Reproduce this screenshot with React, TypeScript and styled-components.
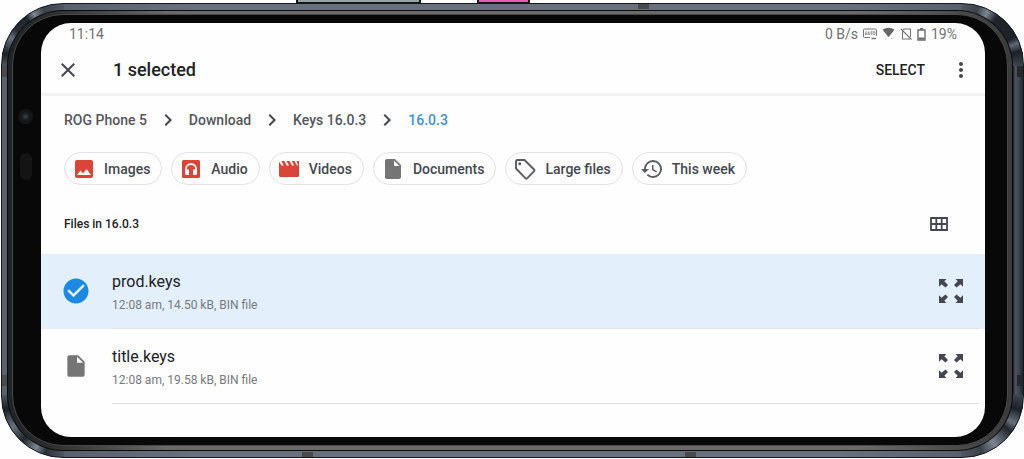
import React from 'react';
import styled, { createGlobalStyle, css } from 'styled-components';
import { MdClose, MdChevronRight, MdImage, MdInsertDriveFile, MdHistory, MdMoreVert, MdCheckCircle } from 'react-icons/md';

const GlobalStyle = createGlobalStyle`
  *, *::before, *::after { box-sizing: border-box; }
  body { margin: 0; background: #fefefe; font-family: Roboto, "Liberation Sans", sans-serif; overflow-x: hidden; }
  h1, h2, p, ul, ol { margin: 0; padding: 0; font-weight: inherit; list-style: none; }
  button { border: 0; padding: 0; background: none; font: inherit; color: inherit; cursor: pointer; }
  svg { display: block; flex: none; }
`;

const ink = '#44474f';

const Page = styled.div`
  display: flex;
  flex-direction: column;
`;

const SideKeys = styled.div`
  display: grid;
  grid-template-columns: 296fr 125fr 56fr 53fr 494fr;
  height: 3px;
`;

const SideKey = styled.span<{ $tone: string; $column: number }>`
  grid-column: ${p => p.$column};
  background: ${p => p.$tone};
  border: solid #151515;
  border-width: 0 2px 1px;
`;

const Rail = styled.div`
  position: relative;
  margin: 0 0 0 1px;
  padding: 6px 10px 6px 5px;
  border-radius: 62px;
  border: 1px solid #14171b;
  background:
    conic-gradient(from 270deg at 100% 100%, #4c555f 0, #1b2026 12deg, #68727e 28deg, #2a3038 36deg, #20252c 52deg, #7c8692 60deg, #3a424b 70deg, #4f5863 90deg) 0 0 / 62px 62px no-repeat,
    conic-gradient(from 0deg at 0 100%, #4f5863 0, #3a424b 16deg, #7c8692 26deg, #20252c 36deg, #1c2128 62deg, #5f6975 68deg, #1b2026 76deg, #3d454f 90deg) 100% 0 / 62px 62px no-repeat,
    conic-gradient(from 90deg at 0 0, #3d454f 0, #1b2026 14deg, #68727e 28deg, #20252c 36deg, #7c8692 56deg, #3a424b 70deg, #4f5863 90deg) 100% 100% / 62px 62px no-repeat,
    conic-gradient(from 180deg at 100% 0, #4f5863 0, #2a3038 18deg, #7c8692 28deg, #20252c 42deg, #68727e 58deg, #1b2026 76deg, #4c555f 90deg) 0 100% / 62px 62px no-repeat,
    linear-gradient(270deg, #20252c 0, #3d454f 4px, #4b5460 8px, #14171b 10px, transparent 10px),
    linear-gradient(90deg, #59626d 0, #59626d 5px, transparent 5px),
    linear-gradient(90deg, #4f5863 0, #68717c 190px, #68717c 82%, #4f5863 100%);
`;

const Trim = styled.div`
  padding: 1px;
  border-radius: 56px;
  background: #0c0c0c;
`;

const Lip = styled.div`
  padding: 3px 4px 4px 4px;
  border-radius: 55px;
  background: linear-gradient(90deg, #202327 0, #2c2c2c 40px, #6b6969 160px, #6b6969 85%, #3a3a3a 100%);
`;

const Bezel = styled.div`
  padding: 8px 22px 8px 28px;
  border-radius: 51px;
  border: 1px solid #4a4a4a;
  background: #080808;
`;

const band = css`
  position: absolute;
  background: #4a4a4b;
`;

const AntennaTop = styled.span`${band} top: 0; left: 62.3%; width: 11px; height: 5px;`;
const AntennaLeft = styled.span<{ $at: string }>`${band} left: 0; top: ${p => p.$at}; width: 5px; height: 11px;`;
const AntennaRight = styled.span<{ $at: string }>`${band} right: 0; top: ${p => p.$at}; width: 6px; height: 11px; background: #26282b;`;
const AntennaBottom = styled.span<{ $at: string }>`${band} bottom: 0; left: ${p => p.$at}; width: 11px; height: 5px;`;

const Camera = styled.span`
  position: absolute;
  left: 16px;
  top: 105px;
  width: 15px;
  height: 15px;
  border-radius: 50%;
  background: radial-gradient(circle, #3b444e 0, #1d2126 3px, #151515 5px);
`;

const Sensor = styled.span`
  position: absolute;
  left: 18px;
  top: 149px;
  width: 12px;
  height: 27px;
  border-radius: 6px;
  background: #141414;
`;

const Screen = styled.main`
  padding-bottom: 33px;
  border-radius: 30px;
  overflow: hidden;
  background: #fefefe;
  color: #202124;
`;

const StatusBar = styled.div`
  display: flex;
  align-items: center;
  justify-content: space-between;
  height: 22px;
  padding: 0 28px;
  font-size: 14px;
  line-height: 20px;
  color: #707070;
`;

const StatusIcons = styled.div`
  display: flex;
  align-items: center;
  gap: 5px;
`;

const Toolbar = styled.header`
  display: flex;
  align-items: center;
  height: 51px;
  padding: 1px 12px 0 15px;
  border-bottom: 3px solid #f2f2f2;
`;

const Title = styled.h1`
  flex: 1;
  margin-left: 33px;
  font-size: 18px;
  line-height: 24px;
  font-weight: 500;
`;

const IconButton = styled.button`
  display: flex;
  color: ${ink};
`;

const SelectButton = styled.button`
  margin-right: 24px;
  font-size: 14px;
  line-height: 20px;
  font-weight: 500;
`;

const Crumbs = styled.ol`
  display: flex;
  align-items: center;
  height: 48px;
  padding: 0 23px;
  font-size: 14px;
  line-height: 20px;
  font-weight: 500;
  color: #54565c;
`;

const Crumb = styled.li`
  display: flex;
  align-items: center;

  svg { margin: 0 9px; color: ${ink}; }
`;

const CrumbLink = styled.a<{ $current?: boolean }>`
  color: ${p => (p.$current ? '#3b93da' : 'inherit')};
  text-decoration: none;
`;

const Chips = styled.div`
  display: flex;
  flex-wrap: wrap;
  gap: 9px;
  padding: 8px 23px 0;
`;

const Chip = styled.button<{ $tone?: string }>`
  display: flex;
  align-items: center;
  gap: 8px;
  height: 33px;
  padding: 0 11px 0 7px;
  border: 1px solid #e2e2e4;
  border-radius: 17px;
  font-size: 14px;
  line-height: 20px;
  font-weight: 500;
  color: ${ink};

  svg { color: ${p => p.$tone ?? '#5a5c62'}; }
`;

const SectionHead = styled.div`
  display: flex;
  align-items: center;
  justify-content: space-between;
  height: 69px;
  padding: 8px 37px 0 23px;
`;

const SectionTitle = styled.h2`
  font-size: 12px;
  line-height: 16px;
  font-weight: 500;
`;

const FileRow = styled.li<{ $selected?: boolean }>`
  display: flex;
  height: 75px;
  padding: 0 6px 0 20px;
  background: ${p => (p.$selected ? '#e3effb' : 'transparent')};
`;

const Pick = styled.label`
  display: flex;
  align-items: center;
  justify-content: center;
  width: 30px;
  padding-bottom: 1px;
  color: #757575;
  cursor: pointer;

  input:checked ~ svg { color: #1e88e5; }
`;

const PickInput = styled.input`
  position: absolute;
  width: 1px;
  height: 1px;
  margin: 0;
  opacity: 0;
`;

const FileBody = styled.div`
  display: flex;
  flex: 1;
  align-items: center;
  justify-content: space-between;
  margin-left: 21px;
  padding-right: 16px;
  border-bottom: 1px solid #dfe1e5;
`;

const FileText = styled.div`
  padding-top: 4px;
`;

const FileName = styled.p`
  font-size: 16px;
  line-height: 24px;
`;

const FileMeta = styled.p`
  font-size: 12px;
  line-height: 22px;
  color: #77797d;
`;

const AutoIcon = () => (
  <svg width="14" height="12" viewBox="0 0 14 12" fill="none" stroke="#777" aria-hidden="true">
    <path d="M7 9.5H1.500Q.5 9.500.5 8.500V2Q.5 1 1.500 1H12.500Q13.500 1 13.500 2V8" />
    <path d="M2.500 7V4.500L3.300 3.500 4 4.500V7M2.500 5.700H4M5.500 3.500V6.500H7V3.500M7.800 3.700H9.600M8.700 3.700V7M10.300 3.700H12V6.500H10.300Z" strokeWidth=".7" />
    <path d="M8.500 10.500H13" strokeWidth="1.600" />
  </svg>
);

const WifiIcon = () => (
  <svg width="13" height="14" viewBox="0 0 13 14" fill="#666" aria-hidden="true">
    <path d="M.5 2.800Q6.500-1.300 12.500 2.800L6.500 10.200Z" />
    <path d="M3 11.500h1.500v1H3zM9 11h1.500v1H9z" opacity=".4" />
  </svg>
);

const NoSimIcon = () => (
  <svg width="12" height="12" viewBox="0 0 12 12" fill="none" stroke="#777" strokeWidth="1.100" aria-hidden="true">
    <path d="M4 1H10.500V9M2.500 3V11H10M4 1L3.200 1.800M1 1L11.500 11.500" />
  </svg>
);

const BatteryIcon = () => (
  <svg width="9" height="13" viewBox="0 0 9 13" fill="none" stroke="#6c6c6c" strokeWidth="1.400" aria-hidden="true">
    <path d="M1 2H8V12H1Z" />
    <path d="M3 .8H6M1.500 10.500H7.500" strokeWidth="1.800" />
  </svg>
);

const AudioIcon = () => (
  <svg width="24" height="24" viewBox="0 0 24 24" aria-hidden="true">
    <rect x="3" y="3" width="18" height="18" rx="1.500" fill="currentColor" />
    <path d="M7 16.500V12a5 5 0 0 1 10 0v4.500" fill="none" stroke="#fff" strokeWidth="1.800" />
    <path d="M6.100 12.500H10V18H7.500Q6.100 18 6.100 16.500ZM17.900 12.500H14V18H16.500Q17.900 18 17.900 16.500Z" fill="#fff" />
  </svg>
);

const VideoIcon = () => (
  <svg width="24" height="24" viewBox="0 0 24 24" fill="currentColor" aria-hidden="true">
    <path d="M2 4.500L4.500 8.500H6.800L4.300 4H7.300L9.800 8.500H12L9.500 4H12.500L15 8.500H17.200L14.700 4H17.500L20 8.500H21L19.500 4H22V18.500Q22 20 20.500 20H3.500Q2 20 2 18.500Z" />
  </svg>
);

const TagIcon = () => (
  <svg width="24" height="24" viewBox="0 0 24 24" aria-hidden="true">
    <path d="M3 4.500Q3 3 4.500 3H11.500L21.300 12.700Q21.800 13.500 21.200 14.200L14 21.400Q13.300 22 12.600 21.400L3 11.500Z" fill="none" stroke="currentColor" strokeWidth="1.900" strokeLinejoin="round" />
    <circle cx="6.800" cy="6.800" r="1.500" fill="currentColor" />
  </svg>
);

const GridIcon = () => (
  <svg width="18" height="14" viewBox="0 0 18 14" fill="none" stroke="currentColor" strokeWidth="1.800" aria-hidden="true">
    <path d="M1 1H17V13H1ZM1 7H17M6.300 1V13M11.700 1V13" />
  </svg>
);

const ExpandIcon = () => (
  <svg width="24" height="24" viewBox="0 0 24 24" fill={ink} aria-hidden="true">
    <path d="M0 0H7.500L5.300 2.200 9 6 6.500 8.500 2.500 5.200 0 7.700Z" />
    <path d="M24 0H16.500L18.700 2.200 15 6 17.500 8.500 21.500 5.200 24 7.700Z" />
    <path d="M0 24H7.500L5.300 21.800 9 18 6.500 15.500 2.500 18.800 0 16.300Z" />
    <path d="M24 24H16.500L18.700 21.800 15 18 17.500 15.500 21.500 18.800 24 16.300Z" />
  </svg>
);

const crumbs = ['ROG Phone 5', 'Download', 'Keys 16.0.3', '16.0.3'];

const red = '#db4437';
const filters = [
  { label: 'Images', icon: <MdImage size={24} />, tone: red },
  { label: 'Audio', icon: <AudioIcon />, tone: red },
  { label: 'Videos', icon: <VideoIcon />, tone: red },
  { label: 'Documents', icon: <MdInsertDriveFile size={24} />, tone: '#757575' },
  { label: 'Large files', icon: <TagIcon /> },
  { label: 'This week', icon: <MdHistory size={24} /> },
];

const files = [
  { name: 'prod.keys', meta: '12:08 am, 14.50 kB, BIN file', selected: true },
  { name: 'title.keys', meta: '12:08 am, 19.58 kB, BIN file', selected: false },
];

export default function App() {
  const [selected, setSelected] = React.useState(files.map(f => f.selected));
  const toggle = (i: number) => setSelected(s => s.map((v, n) => (n === i ? !v : v)));

  return (
    <Page>
      <GlobalStyle />
      <SideKeys>
        <SideKey $column={2} $tone="#9aa5a5" />
        <SideKey $column={4} $tone="#e85bb0" />
      </SideKeys>
      <Rail>
        <AntennaTop />
        <AntennaLeft $at="62px" />
        <AntennaLeft $at="82%" />
        <AntennaRight $at="62px" />
        <AntennaRight $at="82%" />
        <AntennaBottom $at="29.4%" />
        <AntennaBottom $at="66.9%" />
        <Trim>
          <Lip>
            <Bezel>
              <Screen>
                <StatusBar>
                  <span>11:14</span>
                  <StatusIcons>
                    <span>0 B/s</span>
                    <AutoIcon />
                    <WifiIcon />
                    <NoSimIcon />
                    <BatteryIcon />
                    <span>19%</span>
                  </StatusIcons>
                </StatusBar>
                <Toolbar>
                  <IconButton aria-label="Cancel selection"><MdClose size={24} /></IconButton>
                  <Title>{selected.filter(Boolean).length} selected</Title>
                  <SelectButton>SELECT</SelectButton>
                  <IconButton aria-label="More options"><MdMoreVert size={24} /></IconButton>
                </Toolbar>
                <nav aria-label="Folder path">
                  <Crumbs>
                    {crumbs.map((name, i) => (
                      <Crumb key={name}>
                        {i > 0 && <MdChevronRight size={24} />}
                        <CrumbLink href="#" $current={i === crumbs.length - 1}>{name}</CrumbLink>
                      </Crumb>
                    ))}
                  </Crumbs>
                </nav>
                <Chips>
                  {filters.map(f => (
                    <Chip key={f.label} $tone={f.tone}>{f.icon}{f.label}</Chip>
                  ))}
                </Chips>
                <SectionHead>
                  <SectionTitle>Files in 16.0.3</SectionTitle>
                  <IconButton aria-label="Grid view"><GridIcon /></IconButton>
                </SectionHead>
                <ul>
                  {files.map((f, i) => (
                    <FileRow key={f.name} $selected={selected[i]}>
                      <Pick>
                        <PickInput type="checkbox" aria-label={f.name} checked={selected[i]} onChange={() => toggle(i)} />
                        {selected[i] ? <MdCheckCircle size={30} /> : <MdInsertDriveFile size={26} />}
                      </Pick>
                      <FileBody>
                        <FileText>
                          <FileName>{f.name}</FileName>
                          <FileMeta>{f.meta}</FileMeta>
                        </FileText>
                        <IconButton aria-label={`Preview ${f.name}`}><ExpandIcon /></IconButton>
                      </FileBody>
                    </FileRow>
                  ))}
                </ul>
              </Screen>
            </Bezel>
          </Lip>
        </Trim>
        <Camera />
        <Sensor />
      </Rail>
    </Page>
  );
}
